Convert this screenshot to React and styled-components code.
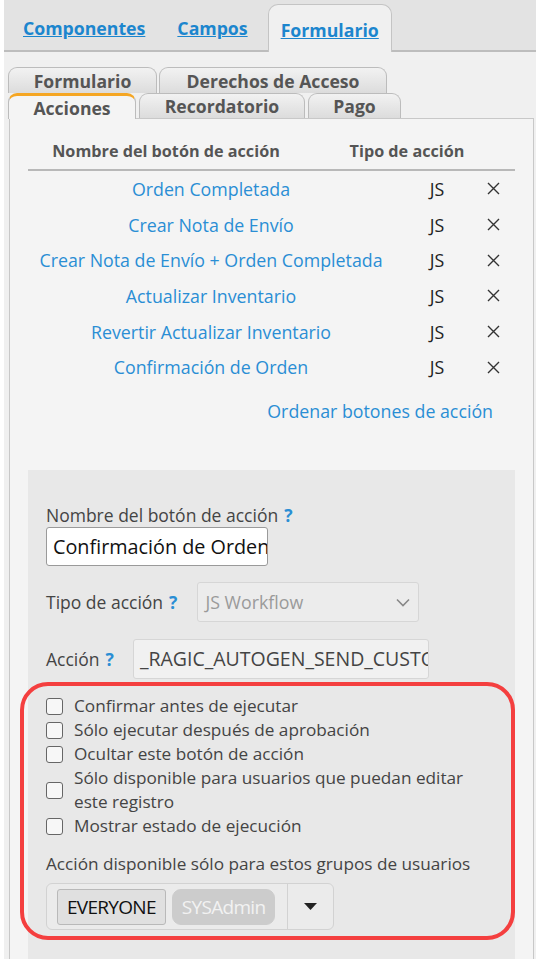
import React from "react";
import styled, { createGlobalStyle } from "styled-components";

const GlobalStyle = createGlobalStyle`
  html, body {
    margin: 0;
    padding: 0;
    background: #ffffff;
    font-family: "Open Sans", "Noto Sans", sans-serif;
  }
  * { box-sizing: border-box; }
`;

const Page = styled.div`
  margin-left: 4px;
  width: 532px;
  min-height: 959px;
  background: #f0f0f0;
  overflow: hidden;
`;

const TopBar = styled.div`
  height: 52px;
  background: #e3e3e3;
  border-bottom: 2px solid #bdbdbd;
  display: flex;
  align-items: flex-end;
  padding-left: 7px;
  gap: 8px;
`;

const TopTab = styled.a`
  height: ${(p) => (p.$active ? "48px" : "40px")};
  margin-bottom: ${(p) => (p.$active ? "-2px" : "0")};
  padding: 0 12px;
  display: flex;
  align-items: center;
  font-size: 17.7px;
  font-weight: 700;
  color: #1c86ce;
  text-decoration: underline;
  background: ${(p) => (p.$active ? "#f0f0f0" : "transparent")};
  border: ${(p) => (p.$active ? "1px solid #c4c4c4" : "none")};
  border-bottom: none;
  border-radius: 10px 10px 0 0;
  line-height: 1;
  & > span { position: relative; top: ${(p) => (p.$active ? "2px" : "-1px")}; }
`;

const SubTabs = styled.div`
  padding: 15px 0 0 4px;
  display: flex;
  flex-direction: column;
`;

const TabRow = styled.div`
  display: flex;
  gap: ${(p) => p.$gap || "2px"};
  position: relative;
  z-index: ${(p) => p.$z || 1};
`;

const SubTab = styled.div`
  width: ${(p) => p.$w}px;
  height: ${(p) => p.$h || 26}px;
  display: flex;
  align-items: center;
  justify-content: center;
  font-size: 17.6px;
  font-weight: 700;
  color: #555555;
  border: 1px solid #bcbcbc;
  border-bottom: none;
  border-radius: 9px 9px 0 0;
  background: linear-gradient(#f2f2f2, #dcdcdc);
  ${(p) =>
    p.$active &&
    `
    background: #f4f4f4;
    border-top: 3px solid #f5a623;
    height: ${(p.$h || 26) + 1}px;
    margin-bottom: -1px;
    padding-top: 1px;
  `}
`;

const Panel = styled.div`
  margin: 0 2px 0 5px;
  border: 1px solid #c8c8c8;
  background: #f4f4f4;
  padding: 20px 18px 0 18px;
  min-height: 860px;
`;

const HeaderRow = styled.div`
  display: grid;
  grid-template-columns: 276px 206px;
  border-bottom: 2px solid #b8b8b8;
  padding-bottom: 6px;
  line-height: 24px;
`;

const HeaderCell = styled.div`
  text-align: center;
  font-size: 16.2px;
  font-weight: 700;
  color: #555555;
`;

const ActionRow = styled.div`
  display: grid;
  grid-template-columns: 366px 84px 32px;
  height: 35.7px;
  align-items: center;
  font-size: 17.8px;
  &:first-of-type { margin-top: -1px; }
`;

const ActionLink = styled.a`
  text-align: center;
  color: #2a8ed4;
  white-space: nowrap;
`;

const TypeCell = styled.span`
  text-align: center;
  color: #222222;
  padding-left: 2px;
`;

const DeleteCell = styled.span`
  display: flex;
  justify-content: center;
  padding-right: 2px;
`;

const SortLink = styled.a`
  display: block;
  text-align: right;
  margin-top: 14px;
  padding-right: 22px;
  font-size: 17.8px;
  line-height: 24px;
  color: #2a8ed4;
`;

const FormArea = styled.div`
  margin-top: 47px;
  background: #e8e8e8;
  padding: 33px 18px 30px 18px;
`;

const Label = styled.div`
  font-size: 17.5px;
  line-height: 24px;
  color: #444444;
  white-space: nowrap;
`;

const Help = styled.span`
  color: #2a8ed4;
  font-weight: 700;
  margin-left: 6px;
`;

const NameInput = styled.div`
  width: 222px;
  height: 39px;
  background: #ffffff;
  border: 1px solid #9a9a9a;
  border-radius: 3px;
  padding: 0 6px;
  font-size: 19.8px;
  line-height: 37px;
  color: #111111;
  white-space: nowrap;
  overflow: hidden;
`;

const FieldRow = styled.div`
  display: flex;
  align-items: center;
  gap: ${(p) => p.$gap}px;
  margin-top: ${(p) => p.$mt}px;
`;

const SelectBox = styled.div`
  width: 222px;
  height: 40px;
  background: #ececec;
  border: 1px solid #d6d6d6;
  border-radius: 3px;
  display: flex;
  align-items: center;
  justify-content: space-between;
  padding: 0 8px 0 7px;
  font-size: 17.8px;
  color: #9a9a9a;
`;

const CodeInput = styled.div`
  width: 296px;
  height: 40px;
  background: #f1f1f1;
  border: 1px solid #d6d6d6;
  border-radius: 3px;
  padding: 0 6px;
  font-size: 19.5px;
  line-height: 38px;
  color: #444444;
  white-space: nowrap;
  overflow: hidden;
`;

const Highlight = styled.div`
  margin: 3px 0 0 -26px;
  width: 495px;
  border: 4px solid #f43f3f;
  border-radius: 28px;
  padding: 8px 20px 6px 22px;
`;

const CheckRow = styled.label`
  display: flex;
  align-items: center;
  gap: 11px;
  font-size: 17.2px;
  line-height: 24px;
  color: #444444;
`;

const Box = styled.span`
  flex: none;
  width: 17px;
  height: 17px;
  border: 1.5px solid #666666;
  border-radius: 3px;
  background: #f7f7f7;
`;

const GroupLabel = styled(Label)`
  margin-top: 14px;
  font-size: 17.2px;
`;

const MultiSelect = styled.div`
  margin-top: 7px;
  width: 288px;
  height: 47px;
  border: 1px solid #d2d2d2;
  border-radius: 6px;
  background: #ebebeb;
  display: flex;
  align-items: center;
  padding-left: 10px;
`;

const Tag = styled.span`
  height: 36px;
  display: flex;
  align-items: center;
  padding: 0 9px;
  margin-right: 6px;
  font-size: 19px;
  letter-spacing: -0.7px;
  ${(p) =>
    p.$muted
      ? `background: #cccccc; color: #f2f2f2; border-radius: 9px; border: 1px solid #cccccc;`
      : `background: #e0e0e0; color: #111111; border-radius: 3px; border: 1px solid #b9b9b9;`}
`;

const Caret = styled.div`
  margin-left: auto;
  width: 46px;
  height: 100%;
  border-left: 1px solid #d2d2d2;
  display: flex;
  align-items: center;
  justify-content: center;
`;

const actions = [
  "Orden Completada",
  "Crear Nota de Envío",
  "Crear Nota de Envío + Orden Completada",
  "Actualizar Inventario",
  "Revertir Actualizar Inventario",
  "Confirmación de Orden",
];

const checks = [
  "Confirmar antes de ejecutar",
  "Sólo ejecutar después de aprobación",
  "Ocultar este botón de acción",
  "Sólo disponible para usuarios que puedan editar este registro",
  "Mostrar estado de ejecución",
];

function CloseIcon() {
  return (
    <svg width="13" height="13" viewBox="0 0 13 13">
      <path d="M1 1 L12 12 M12 1 L1 12" stroke="#333" strokeWidth="1.4" fill="none" />
    </svg>
  );
}

export default function App() {
  return (
    <>
      <GlobalStyle />
      <Page>
        <TopBar>
          <TopTab><span>Componentes</span></TopTab>
          <TopTab><span>Campos</span></TopTab>
          <TopTab $active><span>Formulario</span></TopTab>
        </TopBar>

        <SubTabs>
          <TabRow $gap="2px">
            <SubTab $w={149}>Formulario</SubTab>
            <SubTab $w={228}>Derechos de Acceso</SubTab>
          </TabRow>
          <TabRow $gap="3px" $z={2}>
            <SubTab $w={128} $h={25} $active>Acciones</SubTab>
            <SubTab $w={166} $h={25}>Recordatorio</SubTab>
            <SubTab $w={93} $h={25}>Pago</SubTab>
          </TabRow>
        </SubTabs>

        <Panel>
          <HeaderRow>
            <HeaderCell>Nombre del botón de acción</HeaderCell>
            <HeaderCell>Tipo de acción</HeaderCell>
          </HeaderRow>
          {actions.map((a) => (
            <ActionRow key={a}>
              <ActionLink>{a}</ActionLink>
              <TypeCell>JS</TypeCell>
              <DeleteCell><CloseIcon /></DeleteCell>
            </ActionRow>
          ))}
          <SortLink>Ordenar botones de acción</SortLink>

          <FormArea>
            <Label>Nombre del botón de acción<Help>?</Help></Label>
            <NameInput>Confirmación de Orden</NameInput>

            <FieldRow $gap={20} $mt={16}>
              <Label>Tipo de acción<Help>?</Help></Label>
              <SelectBox>
                <span>JS Workflow</span>
                <svg width="14" height="9" viewBox="0 0 14 9">
                  <path d="M1 1.5 L7 7.5 L13 1.5" stroke="#888" strokeWidth="1.6" fill="none" />
                </svg>
              </SelectBox>
            </FieldRow>

            <FieldRow $gap={19} $mt={17}>
              <Label>Acción<Help>?</Help></Label>
              <CodeInput>_RAGIC_AUTOGEN_SEND_CUSTOMER_CONFIRMATION</CodeInput>
            </FieldRow>

            <Highlight>
              {checks.map((c) => (
                <CheckRow key={c}>
                  <Box />
                  <span>{c}</span>
                </CheckRow>
              ))}
              <GroupLabel>Acción disponible sólo para estos grupos de usuarios</GroupLabel>
              <MultiSelect>
                <Tag>EVERYONE</Tag>
                <Tag $muted>SYSAdmin</Tag>
                <Caret>
                  <svg width="13" height="7" viewBox="0 0 13 7">
                    <path d="M0 0 L13 0 L6.5 7 Z" fill="#222" />
                  </svg>
                </Caret>
              </MultiSelect>
            </Highlight>
          </FormArea>
        </Panel>
      </Page>
    </>
  );
}
